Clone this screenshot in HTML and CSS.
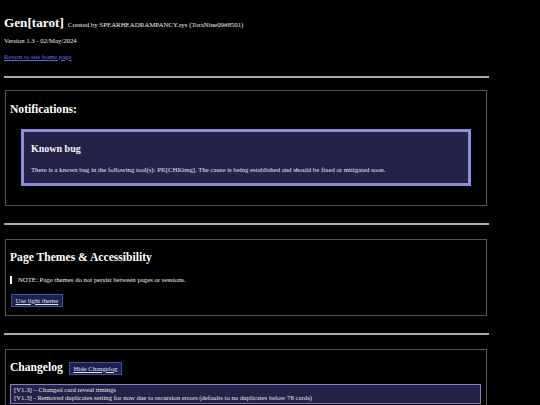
FILE: index.html
```html
<!DOCTYPE html>
<html lang="en">
<head>
<meta charset="utf-8">
<title>Gen[tarot]</title>
<link rel="stylesheet" href="styles.css">
</head>
<body>
<div class="page">
  <header class="site-header">
    <h1 class="title">Gen[tarot]<span class="byline">Created by SPEARHEADRAMPANCY.sys (ToraNine09#8501)</span></h1>
    <p class="version">Version 1.3 - 02/May/2024</p>
    <p class="home"><a href="#" class="link">Return to site home page</a></p>
  </header>

  <hr class="rule rule-first">

  <section class="panel panel-notify">
    <h2 class="panel-title">Notifications:</h2>
    <div class="bug-box">
      <h3 class="bug-title">Known bug</h3>
      <p class="bug-text">There is a known bug in the following tool(s): PK[CHKimg]. The cause is being established and should be fixed or mitigated soon.</p>
    </div>
  </section>

  <hr class="rule">

  <section class="panel panel-themes">
    <h2 class="panel-title">Page Themes &amp; Accessibility</h2>
    <p class="note">NOTE: Page themes do not persist between pages or sessions.</p>
    <button class="btn btn-theme" type="button">Use light theme</button>
  </section>

  <hr class="rule">

  <section class="panel panel-log">
    <div class="log-head">
      <h2 class="panel-title">Changelog</h2>
      <button class="btn btn-hide" type="button">Hide Changelog</button>
    </div>
    <div class="log-box">
      <div class="log-line">[V1.3] – Changed card reveal timings</div>
      <div class="log-line">[V1.3] - Removed duplicates setting for now due to recursion errors (defaults to no duplicates below 78 cards)</div>
    </div>
  </section>
</div>
</body>
</html>
```

FILE: styles.css
```css
html, body {
  margin: 0;
  padding: 0;
  background: #000;
}

body {
  color: #f0f0f0;
  font-family: "Liberation Serif", "Times New Roman", serif;
  font-size: 6.75px;
  line-height: 8px;
  overflow: hidden;
}

.page {
  width: 485px;
  margin-left: 4px;
}

.title {
  margin: 15px 0 0;
  font-size: 13.2px;
  line-height: 15px;
  font-weight: bold;
  color: #fff;
}

.byline {
  margin-left: 4px;
  font-size: 6.85px;
  font-weight: normal;
  color: #f0f0f0;
}

.version {
  margin: 5.3px 0 0;
}

.home {
  margin: 7.5px 0 0;
}

.link {
  color: #5f6ee0;
  text-decoration: underline;
}

.rule {
  border: 0;
  height: 2px;
  background: #a8a8a8;
  margin: 17px 0 13.3px;
}

.rule-first {
  margin-top: 15px;
  margin-bottom: 12px;
}

.panel {
  border: 1px solid #555;
  margin: 0 2px 0 1px;
  padding: 0 5px 0 4px;
}

.panel-title {
  margin: 0;
  font-size: 11.6px;
  line-height: 13px;
  font-weight: bold;
  color: #fff;
}

.panel-notify {
  padding-top: 12px;
  padding-bottom: 19px;
}

.bug-box {
  margin: 13px 10px 0 11px;
  border: 3px solid #8c8cdc;
  background: #25224a;
  padding: 11.3px 8px 9.2px 7px;
}

.bug-title {
  margin: 0;
  font-size: 10px;
  line-height: 12px;
  font-weight: bold;
  color: #f4f4f4;
}

.bug-text {
  margin: 11.2px 0 0;
  color: #e6e6e6;
}

.panel-themes {
  padding-top: 11px;
  padding-bottom: 8.3px;
}

.note {
  margin: 12.2px 0 0;
  border-left: 2px solid #fff;
  padding-left: 6px;
}

.btn {
  font-family: inherit;
  font-size: 6.75px;
  line-height: 8px;
  color: #e0e2f4;
  text-decoration: underline;
  background: #1b2150;
  border: 1px solid #3f4f9e;
  border-radius: 0;
  padding: 1.35px 3.6px;
  margin: 0;
  cursor: pointer;
}

.btn-theme {
  display: block;
  margin: 10.5px 0 0 1px;
}

.panel-log {
  padding-top: 11px;
  padding-bottom: 30px;
}

.log-head {
  display: flex;
  align-items: baseline;
  gap: 6px;
}

.btn-hide {
  padding: 1.7px 3.6px;
}

.log-box {
  margin-top: 8.6px;
  border: 1px solid #8080c8;
  background: #25224a;
  padding: 1.2px 3px;
  color: #e6e6e6;
}

.log-line {
  line-height: 8px;
}
```
